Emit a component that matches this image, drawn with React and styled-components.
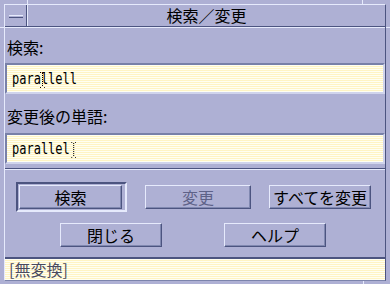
import styled, { createGlobalStyle, css } from "styled-components";

const LIGHT = "#e6eafc";
const DARK = "#4c5480";
const FACE = "#aeb0d4";
const JP = `"Noto Sans CJK JP", "Noto Sans", sans-serif`;

const GlobalStyle = createGlobalStyle`
  html, body {
    margin: 0;
    padding: 0;
    background: ${FACE};
  }
`;

// striped pale yellow text area
const paper = css`
  background-color: #fffbdc;
  background-image: repeating-linear-gradient(#fffff2 0 1px, #fff4c4 1px 2px);
`;

const Window = styled.div`
  width: 390px;
  height: 284px;
  box-sizing: border-box;
  padding: 4px 4px 3px 4px;
  display: flex;
  background-color: ${FACE};
  background-image:
    linear-gradient(${LIGHT}, ${LIGHT}),
    linear-gradient(${LIGHT}, ${LIGHT}),
    linear-gradient(${LIGHT}, ${LIGHT}),
    linear-gradient(${LIGHT}, ${LIGHT}),
    linear-gradient(${LIGHT}, ${LIGHT});
  background-size: 1px 4px, 1px 4px, 1px 3px, 4px 1px, 4px 1px;
  background-position: 27px 0, 362px 0, 363px 281px, 0 27px, 386px 27px;
  background-repeat: no-repeat;
`;

const Frame = styled.div`
  flex: 1;
  display: flex;
  flex-direction: column;
  border-top: 1px solid ${LIGHT};
  border-left: 1px solid ${LIGHT};
  border-right: 1px solid ${DARK};
  border-bottom: 1px solid #7c84ac;
`;

const TitleBar = styled.div`
  height: 22px;
  box-sizing: border-box;
  display: flex;
  border-bottom: 1px solid ${DARK};
`;

const MenuButton = styled.div`
  width: 22px;
  box-sizing: border-box;
  border-right: 1px solid ${DARK};
  display: flex;
  align-items: center;
  justify-content: center;
  padding: 2px 0 0 1px;
`;

const MenuDash = styled.div`
  width: 14px;
  height: 1px;
  background: ${FACE};
  border-top: 1px solid ${LIGHT};
  border-bottom: 1px solid ${DARK};
`;

const Title = styled.div`
  flex: 1;
  border-left: 1px solid ${LIGHT};
  font-family: ${JP};
  font-size: 16px;
  line-height: 20px;
  color: #000;
  text-align: center;
`;

const Content = styled.div`
  flex: 1;
  display: flex;
  flex-direction: column;
  border-top: 1px solid ${LIGHT};
  padding-top: 10px;
`;

const Label = styled.div`
  font-family: ${JP};
  font-size: 16px;
  line-height: 18px;
  color: #000;
  padding-left: 2px;
  margin-top: ${(p) => p.$top || 0}px;
`;

const Field = styled.div`
  height: 31px;
  box-sizing: border-box;
  margin-top: ${(p) => p.$top || 0}px;
  border: 2px solid;
  border-color: #7880a8 #d0d4ec #d0d4ec #7880a8;
  ${paper};
  display: flex;
  align-items: center;
  padding-left: 5px;
`;

// tall, narrow terminal-like lettering
const FieldText = styled.span`
  display: inline-flex;
  align-items: center;
  font-family: "DejaVu Sans Mono", "Liberation Mono", monospace;
  font-size: 15px;
  line-height: 18px;
  color: #000;
  white-space: pre;
  transform: scaleX(0.8);
  transform-origin: left center;
`;

const CaretMark = styled.svg`
  flex: none;
  margin-left: ${(p) => p.$shift}px;
  margin-right: ${(p) => -6 - p.$shift}px;
  margin-top: 2px;
`;

const Separator = styled.div`
  margin-top: 4px;
  border-top: 1px solid ${DARK};
  border-bottom: 1px solid ${LIGHT};
`;

const ButtonArea = styled.div`
  flex: 1;
  display: flex;
  flex-direction: column;
  padding-top: 12px;
  gap: 11px;
`;

const ButtonRow = styled.div`
  display: flex;
  align-items: center;
  padding-left: ${(p) => p.$left}px;
  gap: ${(p) => p.$gap}px;
`;

const DefaultRing = styled.div`
  width: 111px;
  height: 30px;
  box-sizing: border-box;
  padding: 1px;
  border: 2px solid;
  border-color: ${DARK} ${LIGHT} ${LIGHT} ${DARK};
`;

const Button = styled.div`
  width: ${(p) => p.$w}px;
  height: 24px;
  box-sizing: border-box;
  border: 1px solid;
  border-color: ${LIGHT} ${DARK} ${DARK} ${LIGHT};
  box-shadow: inset -1px -1px 0 #8088b0;
  background: ${FACE};
  display: flex;
  align-items: center;
  justify-content: center;
  font-family: ${JP};
  font-size: 16px;
  line-height: 18px;
  color: ${(p) => (p.$disabled ? "#5e6288" : "#000")};
`;

const StatusBar = styled.div`
  height: 23px;
  box-sizing: border-box;
  border-top: 2px solid ${DARK};
  ${paper};
  padding-left: 4px;
  font-family: ${JP};
  font-size: 16px;
  line-height: 21px;
  color: #4a4a5e;
`;

function Caret({ shift }) {
  const dots = [];
  for (let y = 1; y < 15; y += 2) dots.push(<rect key={y} x="2.5" y={y} width="1.25" height="1" />);
  return (
    <CaretMark $shift={shift} width="6" height="16" viewBox="0 0 6 16" fill="#000">
      <rect x="0" y="0" width="1.25" height="1" />
      <rect x="5" y="0" width="1.25" height="1" />
      <rect x="0" y="15" width="1.25" height="1" />
      <rect x="5" y="15" width="1.25" height="1" />
      {dots}
    </CaretMark>
  );
}

export default function App() {
  return (
    <>
      <GlobalStyle />
      <Window>
        <Frame>
          <TitleBar>
            <MenuButton>
              <MenuDash />
            </MenuButton>
            <Title>検索／変更</Title>
          </TitleBar>
          <Content>
            <Label>検索:</Label>
            <Field $top={7}>
              <FieldText>
                para<Caret shift={-1} />llell
              </FieldText>
            </Field>
            <Label $top={13}>変更後の単語:</Label>
            <Field $top={8}>
              <FieldText>
                parallel<Caret shift={2} />
              </FieldText>
            </Field>
            <Separator />
            <ButtonArea>
              <ButtonRow $left={11} $gap={18}>
                <DefaultRing>
                  <Button $w={103}>検索</Button>
                </DefaultRing>
                <Button $w={106} $disabled>変更</Button>
                <Button $w={102}>すべてを変更</Button>
              </ButtonRow>
              <ButtonRow $left={55} $gap={62}>
                <Button $w={102}>閉じる</Button>
                <Button $w={102}>ヘルプ</Button>
              </ButtonRow>
            </ButtonArea>
          </Content>
          <StatusBar>[無変換]</StatusBar>
        </Frame>
      </Window>
    </>
  );
}
